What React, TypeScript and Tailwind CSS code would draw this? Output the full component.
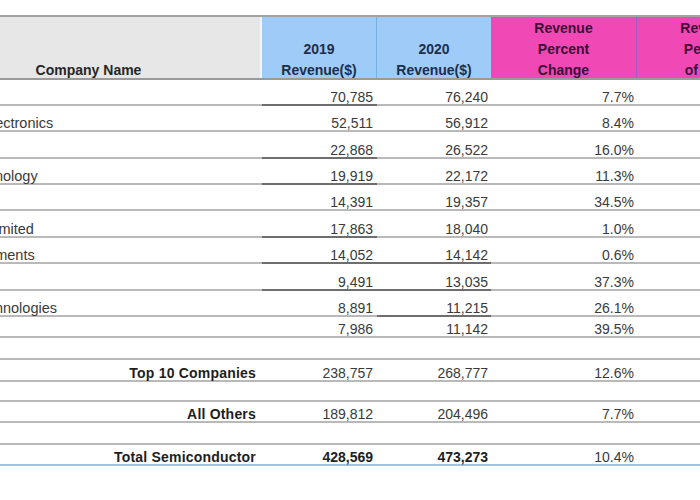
import React from 'react';

type Row = {
  name: string;
  y19: string;
  y20: string;
  change: string;
  share: string;
  h: string;
  dark19?: boolean;
  dark20?: boolean;
};

// top ten rows, heights include the 2px bottom rule
const topTen: Row[] = [
  { name: 'Intel', y19: '70,785', y20: '76,240', change: '7.7%', share: '16.1%', h: 'h-[26px]', dark19: true },
  { name: 'Samsung Electronics', y19: '52,511', y20: '56,912', change: '8.4%', share: '12.0%', h: 'h-[26px]' },
  { name: 'SK hynix', y19: '22,868', y20: '26,522', change: '16.0%', share: '5.6%', h: 'h-[27px]', dark19: true },
  { name: 'Micron Technology', y19: '19,919', y20: '22,172', change: '11.3%', share: '4.7%', h: 'h-[26px]', dark19: true },
  { name: 'Qualcomm', y19: '14,391', y20: '19,357', change: '34.5%', share: '4.1%', h: 'h-[26px]' },
  { name: 'Broadcom Limited', y19: '17,863', y20: '18,040', change: '1.0%', share: '3.8%', h: 'h-[27px]', dark19: true },
  { name: 'Texas Instruments', y19: '14,052', y20: '14,142', change: '0.6%', share: '3.0%', h: 'h-[26px]', dark19: true, dark20: true },
  { name: 'MediaTek', y19: '9,491', y20: '13,035', change: '37.3%', share: '2.8%', h: 'h-[27px]', dark19: true, dark20: true },
  { name: 'Infineon Technologies', y19: '8,891', y20: '11,215', change: '26.1%', share: '2.4%', h: 'h-[26px]', dark20: true },
  { name: 'Nvidia', y19: '7,986', y20: '11,142', change: '39.5%', share: '2.4%', h: 'h-[21px]' },
];

const light = 'border-[#b9b9b9]';
const dark = 'border-[#6e6e6e]';

function DataRow({ r }: { r: Row }) {
  return (
    <div className={`flex ${r.h}`}>
      <div className={`w-[362px] border-b-2 ${light} flex items-end pl-[17px] text-[14.5px] leading-[14px] text-[#3a3a3a] whitespace-nowrap`}>
        {r.name}
      </div>
      <div className={`w-[115px] border-b-2 ${r.dark19 ? dark : light} flex items-end justify-end pr-[4px] text-[14px] leading-[14px] text-[#3a3a3a]`}>
        {r.y19}
      </div>
      <div className={`w-[114px] border-b-2 ${r.dark20 ? dark : light} flex items-end justify-end pr-[3px] text-[14px] leading-[14px] text-[#3a3a3a]`}>
        {r.y20}
      </div>
      <div className={`w-[146px] border-b-2 ${light} flex items-end justify-end pr-[3px] text-[14px] leading-[14px] text-[#3a3a3a]`}>
        {r.change}
      </div>
      <div className={`w-[145px] border-b-2 ${light} flex items-end justify-end pr-[3px] text-[14px] leading-[14px] text-[#3a3a3a]`}>
        {r.share}
      </div>
    </div>
  );
}

function SumRow({
  label,
  y19,
  y20,
  change,
  share,
  h,
  bold,
  blue,
}: {
  label: string;
  y19: string;
  y20: string;
  change: string;
  share: string;
  h: string;
  bold?: boolean;
  blue?: boolean;
}) {
  const rule = blue ? 'border-[#93c9e4]' : light;
  const num = bold ? 'font-bold text-[#1e1e1e]' : 'text-[#3a3a3a]';
  return (
    <div className={`flex ${h} border-b-2 ${rule} text-[14px] leading-[14px]`}>
      <div className="w-[362px] flex items-end justify-end pr-[6px] font-bold text-[#1e1e1e] tracking-[0.2px]">{label}</div>
      <div className={`w-[115px] flex items-end justify-end pr-[4px] ${num}`}>{y19}</div>
      <div className={`w-[114px] flex items-end justify-end pr-[3px] ${num}`}>{y20}</div>
      <div className="w-[146px] flex items-end justify-end pr-[3px] text-[#3a3a3a]">{change}</div>
      <div className="w-[145px] flex items-end justify-end pr-[3px] text-[#3a3a3a]">{share}</div>
    </div>
  );
}

function Spacer({ h }: { h: string }) {
  return <div className={`${h} border-b-2 ${light}`} />;
}

export default function App() {
  return (
    <div
      className="w-[700px] h-[500px] overflow-hidden bg-white"
      style={{ fontFamily: '"Liberation Sans", Arial, sans-serif' }}
    >
      <div className="w-[882px] -ml-[100px] pt-[15px]">
        {/* header */}
        <div className="flex h-[65px] border-t-2 border-b-2 border-t-[#a3a3a3] border-b-[#9a9a9a] text-[14px] font-bold leading-[21px]">
          <div className="w-[362px] bg-[#e7e7e7] border-r-2 border-[#f3f6f8] flex items-end justify-center pl-[17px] text-[#262626]">
            <span className="-mb-[3px]">Company Name</span>
          </div>
          <div className="w-[115px] bg-[#9ecbf8] border-r border-[#7aaedf] flex flex-col items-center justify-end text-[#1c2f4a]">
            <div className="flex flex-col items-center -mb-[3px]">
              <span>2019</span>
              <span>Revenue($)</span>
            </div>
          </div>
          <div className="w-[114px] bg-[#9ecbf8] flex flex-col items-center justify-end text-[#1c2f4a]">
            <div className="flex flex-col items-center -mb-[3px]">
              <span>2020</span>
              <span>Revenue($)</span>
            </div>
          </div>
          <div className="w-[146px] bg-[#f048b5] border-r border-[#a85ac6] flex flex-col items-center justify-end text-[#3d0f37]">
            <div className="flex flex-col items-center -mb-[3px]">
              <span>Revenue</span>
              <span>Percent</span>
              <span>Change</span>
            </div>
          </div>
          <div className="w-[145px] bg-[#f048b5] flex flex-col items-center justify-end text-[#3d0f37]">
            <div className="flex flex-col items-center -mb-[3px]">
              <span>Revenue</span>
              <span>Percent</span>
              <span>of Total</span>
            </div>
          </div>
        </div>

        {topTen.map((r) => (
          <DataRow key={r.name} r={r} />
        ))}

        <Spacer h="h-[22px]" />
        <SumRow label="Top 10 Companies" y19="238,757" y20="268,777" change="12.6%" share="56.8%" h="h-[22px]" />
        <Spacer h="h-[20px]" />
        <SumRow label="All Others" y19="189,812" y20="204,496" change="7.7%" share="43.2%" h="h-[21px]" />
        <Spacer h="h-[22px]" />
        <SumRow label="Total Semiconductor" y19="428,569" y20="473,273" change="10.4%" share="100.0%" h="h-[21px]" bold blue />
      </div>
    </div>
  );
}
